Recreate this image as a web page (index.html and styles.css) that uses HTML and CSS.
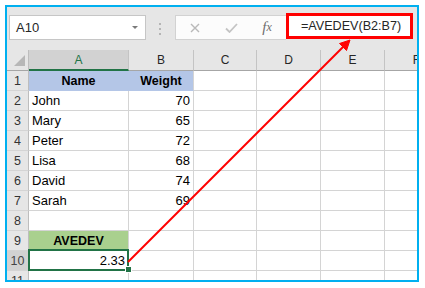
FILE: index.html
```html
<!DOCTYPE html>
<html>
<head>
<meta charset="utf-8">
<link rel="stylesheet" href="styles.css">
</head>
<body>
<div class="frame">
  <div class="fbar">
    <div class="namebox"><span>A10</span><span class="caret"></span></div>
    <div class="dots"><i></i><i></i><i></i></div>
    <div class="fbox">
      <span class="slot"><svg width="10" height="10" viewBox="0 0 10 10"><path d="M1 1L9 9M9 1L1 9" stroke="#b9b9b9" stroke-width="1.4" fill="none"/></svg></span>
      <span class="slot"><svg width="13" height="10" viewBox="0 0 13 10"><path d="M1 5.5L4.5 9L12 1" stroke="#c4c4c4" stroke-width="1.8" fill="none"/></svg></span>
      <span class="slot fx">f<span class="fxx">x</span></span>
    </div>
    <div class="formula">=AVEDEV(B2:B7)</div>
  </div>
  <div class="sheet">
    <div class="ch corner"><span class="tri"></span></div>
    <div class="ch selcol">A</div>
    <div class="ch">B</div>
    <div class="ch">C</div>
    <div class="ch">D</div>
    <div class="ch">E</div>
    <div class="ch">F</div>

    <div class="rh">1</div>
    <div class="c hd blue bl">Name</div>
    <div class="c hd blue">Weight</div>
    <div class="c"></div><div class="c"></div><div class="c"></div><div class="c"></div>

    <div class="rh">2</div>
    <div class="c">John</div><div class="c num">70</div>
    <div class="c"></div><div class="c"></div><div class="c"></div><div class="c"></div>

    <div class="rh">3</div>
    <div class="c">Mary</div><div class="c num">65</div>
    <div class="c"></div><div class="c"></div><div class="c"></div><div class="c"></div>

    <div class="rh">4</div>
    <div class="c">Peter</div><div class="c num">72</div>
    <div class="c"></div><div class="c"></div><div class="c"></div><div class="c"></div>

    <div class="rh">5</div>
    <div class="c">Lisa</div><div class="c num">68</div>
    <div class="c"></div><div class="c"></div><div class="c"></div><div class="c"></div>

    <div class="rh">6</div>
    <div class="c">David</div><div class="c num">74</div>
    <div class="c"></div><div class="c"></div><div class="c"></div><div class="c"></div>

    <div class="rh">7</div>
    <div class="c">Sarah</div><div class="c num">69</div>
    <div class="c"></div><div class="c"></div><div class="c"></div><div class="c"></div>

    <div class="rh">8</div>
    <div class="c"></div><div class="c"></div>
    <div class="c"></div><div class="c"></div><div class="c"></div><div class="c"></div>

    <div class="rh">9</div>
    <div class="c hd green">AVEDEV</div><div class="c"></div>
    <div class="c"></div><div class="c"></div><div class="c"></div><div class="c"></div>

    <div class="rh selrow">10</div>
    <div class="c num sel">2.33<span class="handle"></span></div><div class="c"></div>
    <div class="c"></div><div class="c"></div><div class="c"></div><div class="c"></div>

    <div class="rh">11</div>
    <div class="c"></div><div class="c"></div>
    <div class="c"></div><div class="c"></div><div class="c"></div><div class="c"></div>
  </div>
  <svg class="arrow" width="410" height="273" viewBox="0 0 410 273">
    <line x1="121" y1="255" x2="337" y2="39" stroke="#ff0000" stroke-width="2"/>
    <polygon points="343,33 339.5,43.5 332.5,36.5" fill="#ff0000" stroke="#ff0000" stroke-width="1"/>
  </svg>
</div>
</body>
</html>
```

FILE: styles.css
```css
* { box-sizing: border-box; }
body {
  margin: 0;
  background: #ffffff;
  font-family: "Liberation Sans", Arial, sans-serif;
}
.frame {
  position: relative;
  margin: 5px 0 0 5px;
  width: 414px;
  height: 277px;
  border: 2px solid #00b0f0;
  overflow: hidden;
  background: #ffffff;
}
.fbar {
  height: 43px;
  background: #e6e6e6;
  display: flex;
  align-items: flex-start;
  padding: 8px 0 0 2px;
}
.namebox {
  width: 137px;
  height: 25px;
  flex: none;
  background: #ffffff;
  border: 1px solid #c6c6c6;
  display: flex;
  align-items: center;
  justify-content: space-between;
  padding: 0 7px 0 6px;
  font-size: 13px;
  color: #262626;
}
.caret {
  width: 0;
  height: 0;
  border-left: 3.5px solid transparent;
  border-right: 3.5px solid transparent;
  border-top: 3.5px solid #7a7a7a;
}
.dots {
  display: flex;
  flex-direction: column;
  gap: 3px;
  margin: 8px 14px 0 13px;
  flex: none;
}
.dots i {
  display: block;
  width: 2px;
  height: 2px;
  background: #b5b5b5;
}
.fbox {
  width: 111px;
  height: 25px;
  flex: none;
  background: #fcfcfc;
  border: 1px solid #d2d2d2;
  border-right: none;
  display: flex;
  align-items: center;
}
.slot {
  width: 37px;
  display: flex;
  justify-content: center;
  align-items: center;
}
.fx {
  width: 34px;
  font-family: "Liberation Serif", "Times New Roman", serif;
  font-style: italic;
  font-size: 15px;
  color: #6e6e6e;
}
.fxx {
  font-size: 12px;
}
.formula {
  width: 127px;
  height: 26px;
  flex: none;
  margin-top: -2px;
  background: #ffffff;
  border: 3px solid #ff0000;
  font-size: 12.6px;
  color: #262626;
  display: flex;
  align-items: center;
  padding-left: 12px;
  white-space: nowrap;
}
.sheet {
  display: grid;
  grid-template-columns: 22px 100px 65px 63px 64px 64px 64px;
  grid-template-rows: 21px;
  grid-auto-rows: 20px;
  width: 442px;
}
.ch {
  background: #e6e6e6;
  border-right: 1px solid #c4c4c4;
  border-bottom: 1px solid #a6a6a6;
  font-size: 12px;
  color: #262626;
  display: flex;
  align-items: center;
  justify-content: center;
}
.corner {
  position: relative;
  border-right: 1px solid #bdbdbd;
}
.tri {
  position: absolute;
  right: 3px;
  bottom: 4px;
  width: 0;
  height: 0;
  border-left: 11px solid transparent;
  border-bottom: 11px solid #b7b7b7;
}
.selcol {
  background: #d2d2d2;
  color: #217346;
  border-bottom: 2px solid #217346;
}
.rh {
  background: #e6e6e6;
  border-right: 1px solid #bdbdbd;
  border-bottom: 1px solid #d4d4d4;
  font-size: 12.5px;
  color: #333333;
  display: flex;
  align-items: center;
  justify-content: center;
}
.selrow {
  background: #d2d2d2;
  color: #444444;
}
.c {
  border-right: 1px solid #d4d4d4;
  border-bottom: 1px solid #d4d4d4;
  font-size: 13px;
  color: #000000;
  display: flex;
  align-items: center;
  padding: 0 3px;
  white-space: nowrap;
}
.num {
  justify-content: flex-end;
}
.hd {
  font-weight: bold;
  font-size: 12.5px;
  justify-content: center;
}
.blue {
  background: #b4c6e7;
  border-bottom-color: #b4c6e7;
}
.blue.bl {
  border-right-color: #b4c6e7;
}
.green {
  background: #a9d08e;
  border-bottom-color: #a9d08e;
}
.sel {
  position: relative;
}
.sel::after {
  content: "";
  position: absolute;
  left: -1px;
  top: -2px;
  right: -1px;
  bottom: -1px;
  border: 2px solid #217346;
}
.handle {
  position: absolute;
  right: -4px;
  bottom: -3px;
  width: 7px;
  height: 7px;
  background: #217346;
  border: 1px solid #ffffff;
  z-index: 2;
}
.arrow {
  position: absolute;
  left: 0;
  top: 0;
  pointer-events: none;
  z-index: 3;
}
```
